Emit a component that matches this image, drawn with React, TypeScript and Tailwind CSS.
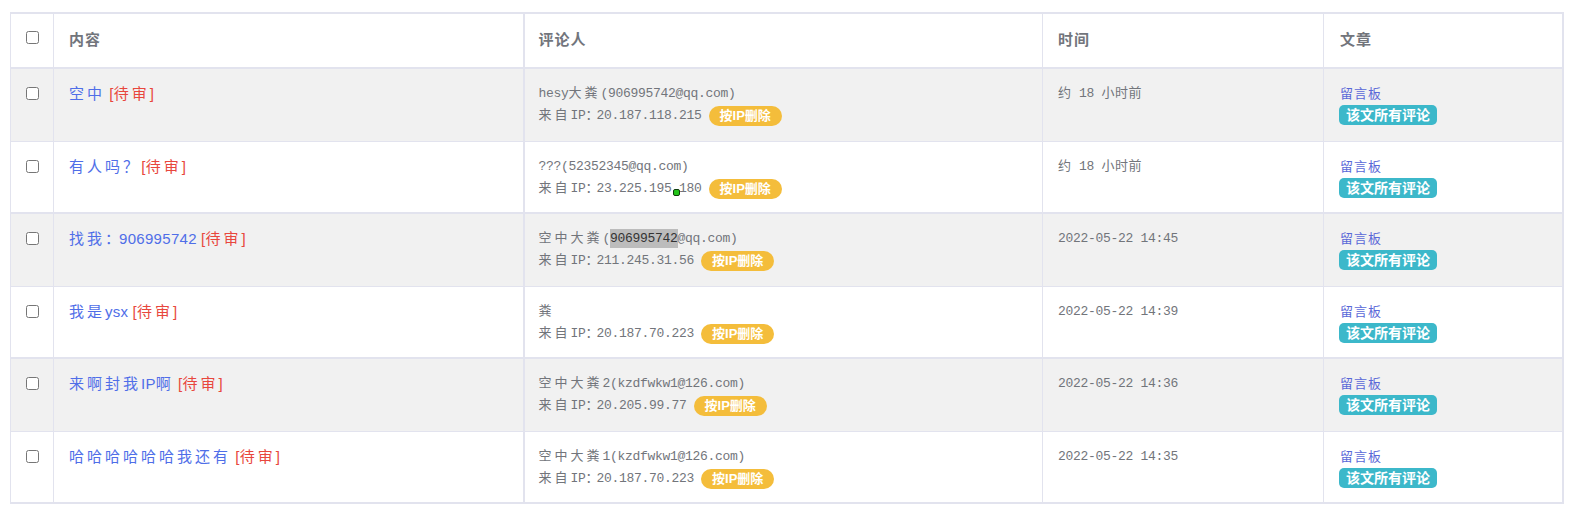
import React from "react";

type Row = {
  content: string;
  who: { t: string; hl?: boolean }[];
  ip: string;
  dot?: boolean;
  time: string;
};

const rows: Row[] = [
  {
    content: "空中",
    who: [{ t: "hesy大粪(906995742@qq.com)" }],
    ip: "20.187.118.215",
    time: "约 18 小时前",
  },
  {
    content: "有人吗？",
    who: [{ t: "???(52352345@qq.com)" }],
    ip: "23.225.195.180",
    dot: true,
    time: "约 18 小时前",
  },
  {
    content: "找我：906995742",
    who: [{ t: "空中大粪(" }, { t: "906995742", hl: true }, { t: "@qq.com)" }],
    ip: "211.245.31.56",
    time: "2022-05-22 14:45",
  },
  {
    content: "我是ysx",
    who: [{ t: "粪" }],
    ip: "20.187.70.223",
    time: "2022-05-22 14:39",
  },
  {
    content: "来啊封我IP啊",
    who: [{ t: "空中大粪2(kzdfwkw1@126.com)" }],
    ip: "20.205.99.77",
    time: "2022-05-22 14:36",
  },
  {
    content: "哈哈哈哈哈哈我还有",
    who: [{ t: "空中大粪1(kzdfwkw1@126.com)" }],
    ip: "20.187.70.223",
    time: "2022-05-22 14:35",
  },
];

type Spacing = { han: string; punct: string; latin: string };

const contentSp: Spacing = {
  han: "tracking-[3px]",
  punct: "tracking-[-1px]",
  latin: "tracking-[0.3px]",
};
const monoSp: Spacing = {
  han: "tracking-[3px]",
  punct: "tracking-[-2px]",
  latin: "tracking-[-0.3px]",
};
const timeSp: Spacing = {
  han: "tracking-[0.5px]",
  punct: "",
  latin: "tracking-[-0.3px]",
};

const split = (text: string, sp: Spacing) =>
  text
    .split(/([\u4e00-\u9fff]+|[\uff01-\uff5e\u3000-\u303f]+)/)
    .filter(Boolean)
    .map((part, i) => {
      const cls = /[\u4e00-\u9fff]/.test(part)
        ? sp.han
        : /[\uff01-\uff5e\u3000-\u303f]/.test(part)
        ? sp.punct
        : sp.latin;
      return (
        <span key={i} className={cls}>
          {part}
        </span>
      );
    });

const sans = "font-['Liberation_Sans','Noto_Sans_CJK_SC',sans-serif]";
const mono = "font-['Liberation_Mono','Noto_Sans_CJK_SC',monospace]";

const Box = () => (
  <input
    type="checkbox"
    className="w-[13px] h-[13px] m-0 align-top accent-[#666]"
  />
);

const App = () => {
  return (
    <div className="bg-white min-h-[508px] pt-[12px] pl-[10px]">
      <table
        className={`w-[1554px] table-fixed border-collapse ${sans} border-t-2 border-b-2 border-l border-r-2 border-[#e2e3ee]`}
      >
        <colgroup>
          <col className="w-[43px]" />
          <col className="w-[470px]" />
          <col className="w-[519px]" />
          <col className="w-[281px]" />
          <col />
        </colgroup>
        <thead>
          <tr className="h-[55px] border-b-2 border-[#e2e3ee]">
            <th className="border-r border-[#e2e3ee] text-center align-top pt-[17px]">
              <Box />
            </th>
            <th className="border-r-2 border-[#e2e3ee] text-left px-[15px] text-[15px] font-bold tracking-[1px] text-[#72757c]">
              内容
            </th>
            <th className="border-r border-[#e2e3ee] text-left px-[14px] text-[15px] font-bold tracking-[1px] text-[#72757c]">
              评论人
            </th>
            <th className="border-r border-[#e2e3ee] text-left px-[15px] text-[15px] font-bold tracking-[1px] text-[#72757c]">
              时间
            </th>
            <th className="text-left px-[16px] text-[15px] font-bold tracking-[1px] text-[#72757c]">
              文章
            </th>
          </tr>
        </thead>
        <tbody>
          {rows.map((r, i) => (
            <tr
              key={i}
              className={`border-[#e2e3ee] ${
                i % 2 === 0 ? "h-[73px] bg-[#f1f1f1]" : "h-[72px] bg-white"
              } ${i > 0 && i % 2 === 0 ? "border-t-2" : i > 0 ? "border-t" : ""}`}
            >
              <td className="border-r border-[#e2e3ee] align-top text-center pt-[18px]">
                <Box />
              </td>
              <td className="border-r-2 border-[#e2e3ee] align-top px-[15px] pt-[14px] text-[15px] leading-[22px]">
                <span className="text-[#4f6ee8]">{split(r.content, contentSp)}</span>{" "}
                <span className="text-[#e8473d]">{split("[待审]", contentSp)}</span>
              </td>
              <td
                className={`border-r border-[#e2e3ee] align-top px-[14px] pt-[14px] text-[13px] leading-[22px] text-[#72757b] ${mono}`}
              >
                <div>
                  {r.who.map((w, k) =>
                    w.hl ? (
                      <span
                        key={k}
                        className="inline-block leading-[19px] bg-[#bcbcbc] text-[#333]"
                      >
                        {split(w.t, monoSp)}
                      </span>
                    ) : (
                      <span key={k}>{split(w.t, monoSp)}</span>
                    )
                  )}
                </div>
                <div className="relative flex items-center">
                  <span>{split("来自IP：" + r.ip, monoSp)}</span>
                  <span
                    className={`ml-[7px] inline-flex items-center h-[20px] px-[11px] rounded-full bg-[#f4bd3b] text-white text-[13px] font-bold ${sans}`}
                  >
                    按IP删除
                  </span>
                  {r.dot && (
                    <span className="absolute left-[134px] top-[11px] w-[7px] h-[7px] rounded-[2px] bg-[#22c41a] border border-[#0f3d0c]" />
                  )}
                </div>
              </td>
              <td
                className={`border-r border-[#e2e3ee] align-top px-[15px] pt-[14px] text-[13px] leading-[22px] text-[#72757b] ${mono}`}
              >
                {split(r.time, timeSp)}
              </td>
              <td className="align-top px-[15px] pt-[14px] text-[13px] leading-[22px]">
                <div className="text-[#5a68d8] tracking-[1px] pl-[1px]">留言板</div>
                <div>
                  <span className="inline-flex items-center h-[20px] px-[7px] rounded-[5px] bg-[#3cb8ca] text-white text-[14px] font-bold">
                    该文所有评论
                  </span>
                </div>
              </td>
            </tr>
          ))}
        </tbody>
      </table>
    </div>
  );
};

export default App;
